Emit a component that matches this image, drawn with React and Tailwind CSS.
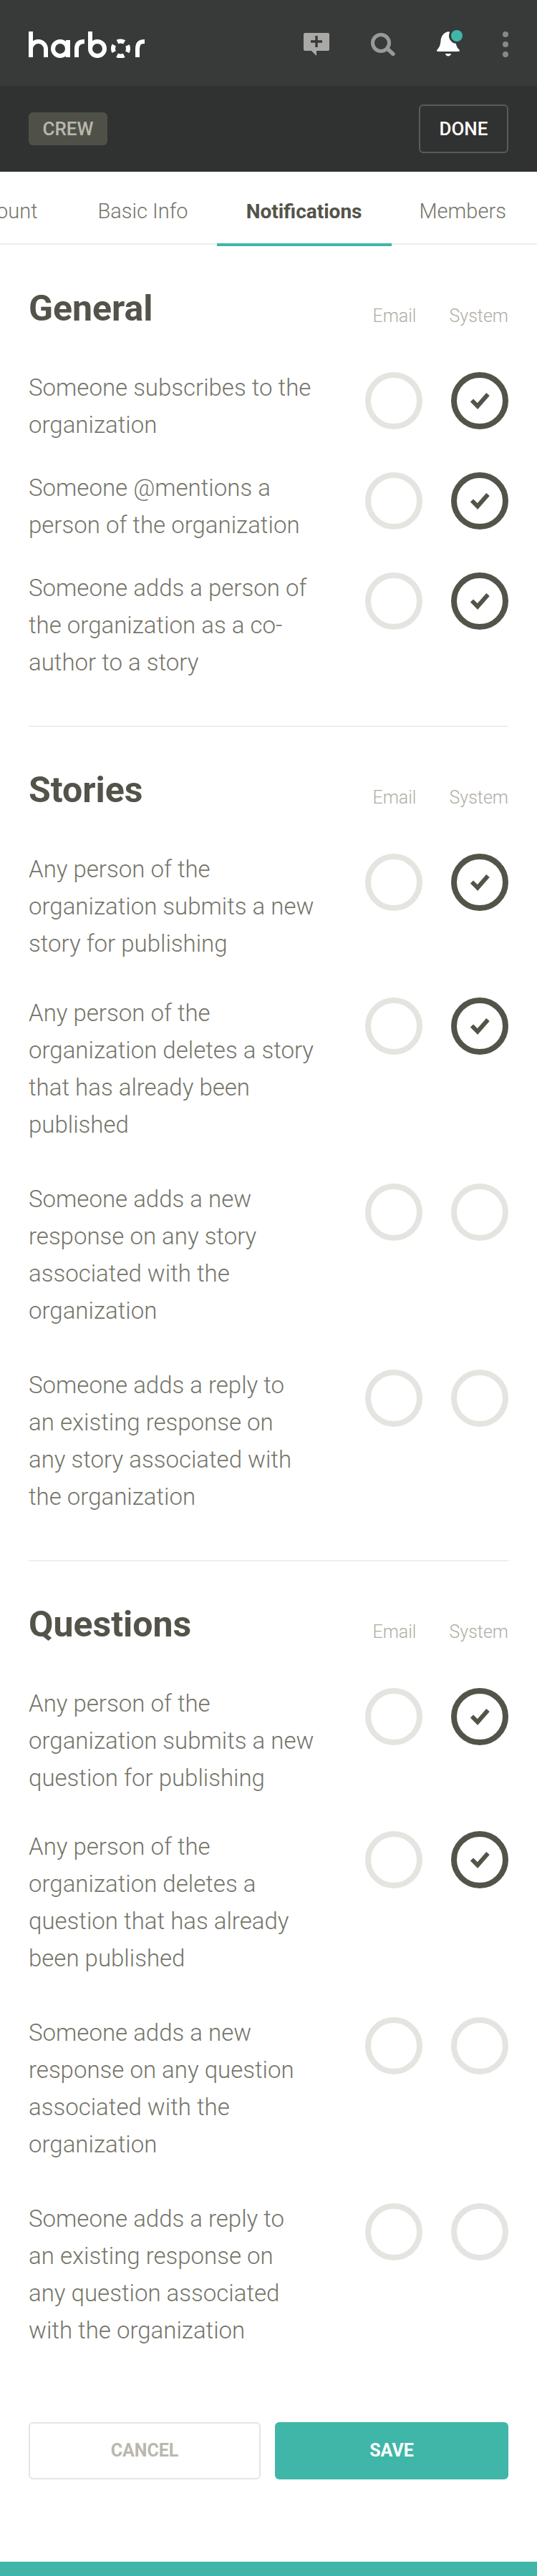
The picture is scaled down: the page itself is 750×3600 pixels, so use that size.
function Circle({ on }) {
  return (
    <div className={`flex h-[80px] w-[80px] items-center justify-center rounded-full border-[8px] ${on ? "border-[#53534a]" : "border-[#e4e4e0]"}`}>
      {on && (
        <svg width="28" height="24" viewBox="0 0 28 24" fill="none">
          <path d="M3 11.5 L11 19.5 L25.5 3" stroke="#53534a" strokeWidth="6" />
        </svg>
      )}
    </div>
  );
}

function Row({ text, system, pb }) {
  return (
    <div className={`flex items-start justify-between ${pb}`}>
      <p className="mb-[-2px] w-[402px] pt-[2px] text-[33px] leading-[52px] font-light text-[#74756a]">{text}</p>
      <div className="flex gap-[40px] pt-[6px]">
        <Circle />
        <Circle on={system} />
      </div>
    </div>
  );
}

function Head({ title }) {
  return (
    <div className="flex items-end justify-between">
      <h2 className="text-[50px] leading-[56px] font-bold text-[#53534a]">{title}</h2>
      <div className="flex gap-[46px] pb-[1px] text-[25px] leading-[32px] font-light text-[#aeada3]">
        <span>Email</span>
        <span>System</span>
      </div>
    </div>
  );
}

const sections = [
  {
    title: "General",
    rows: [
      ["Someone subscribes to the organization", true, "pb-[36px]"],
      ["Someone @mentions a person of the organization", true, "pb-[36px]"],
      ["Someone adds a person of the organization as a co-author to a story", true, "pb-[64px]"],
    ],
  },
  {
    title: "Stories",
    rows: [
      ["Any person of the organization submits a new story for publishing", true, "pb-[45px]"],
      ["Any person of the organization deletes a story that has already been published", true, "pb-[52px]"],
      ["Someone adds a new response on any story associated with the organization", false, "pb-[52px]"],
      ["Someone adds a reply to an\u00a0existing response on any\u00a0story associated with the organization", false, "pb-[64px]"],
    ],
  },
  {
    title: "Questions",
    rows: [
      ["Any person of the organization submits a new question for publishing", true, "pb-[44px]"],
      ["Any person of the organization deletes a question that has already been published", true, "pb-[52px]"],
      ["Someone adds a new response on any question associated with the organization", false, "pb-[52px]"],
      ["Someone adds a reply to an\u00a0existing response on any\u00a0question associated with the organization", false, "pb-[64px]"],
    ],
  },
];

export default function App() {
  return (
    <div className="flex h-[3600px] w-[750px] flex-col overflow-hidden bg-white font-['Roboto',sans-serif]">
      <header className="flex h-[120px] shrink-0 items-center justify-between bg-[#383a39] px-[40px] pt-[4px]">
        <svg width="162" height="37" viewBox="0 0 162 37" fill="none" stroke="#fff" strokeWidth="6">
          <path d="M3 0 V36 M24 36 V24.5 A10.5 10.5 0 0 0 3 24.5" />
          <circle cx="44" cy="24" r="10" />
          <path d="M55 12 V36" />
          <path d="M67 36 V24 C67 16 72 14 78 14" />
          <path d="M86 0 V24" />
          <circle cx="96" cy="24" r="10" />
          <circle cx="128.5" cy="24" r="10.5" strokeDasharray="10 6.5" strokeDashoffset="5" />
          <path d="M152 36 V24 C152 16 156 14 162 14" />
        </svg>
        <div className="flex items-center">
          <svg className="mr-[58px]" width="36" height="32" viewBox="0 0 36 32">
            <path d="M2 0 H34 a2 2 0 0 1 2 2 V23 a2 2 0 0 1 -2 2 H18 V32 L11 25 H2 a2 2 0 0 1 -2 -2 V2 a2 2 0 0 1 2 -2 Z" fill="#a9a9a7" />
            <path d="M18 4 V20 M10 12 H26" stroke="#383a39" strokeWidth="3.4" />
          </svg>
          <svg className="mr-[58px]" width="34" height="32" viewBox="0 0 34 32" fill="none">
            <circle cx="14" cy="14" r="11.5" stroke="#999" strokeWidth="5" />
            <path d="M23.5 22.5 L31 29.5" stroke="#999" strokeWidth="5.4" strokeLinecap="round" />
          </svg>
          <div className="relative mr-[60px] h-[36px] w-[32px]">
            <svg width="32" height="36" viewBox="0 0 32 36">
              <path d="M16 0 C8 2 6 8 5.5 13 C5 20 3 23 0.5 25.5 C-0.5 27.5 0.5 28 2 28 H30 C31.5 28 32.5 26.5 31.5 25.5 C28.5 23 27 20 26.5 14 C26 7 23 2 16 0 Z" fill="#fff" />
              <path d="M12 31 H20 C19.5 35.5 12.5 35.5 12 31 Z" fill="#fff" />
            </svg>
            <span className="absolute left-[20px] top-[-2px] h-[16px] w-[16px] rounded-full bg-[#40b6a8] ring-[3px] ring-[#383a39]" />
          </div>
          <div className="flex flex-col gap-[6px]">
            <span className="h-[8px] w-[8px] rounded-full bg-[#888]" />
            <span className="h-[8px] w-[8px] rounded-full bg-[#888]" />
            <span className="h-[8px] w-[8px] rounded-full bg-[#888]" />
          </div>
        </div>
      </header>
      <div className="flex h-[120px] shrink-0 items-center justify-between bg-[#303231] px-[40px]">
        <span className="flex h-[46px] w-[110px] items-center justify-center rounded-[6px] bg-[#4f5149] text-[26px] font-medium text-[#b9b8ae]">CREW</span>
        <span className="flex h-[68px] w-[125px] items-center justify-center rounded-[6px] border-2 border-[#5a5b54] text-[26px] font-medium text-white">DONE</span>
      </div>
      <nav className="flex h-[102px] shrink-0 items-start border-b-2 border-[#eeeeee] text-[29px] font-light whitespace-nowrap text-[#74756a]">
        <span className="ml-[-97px] flex h-[100px] items-center px-[44px] pt-[12px]">Account</span>
        <span className="flex h-[100px] items-center px-[40px] pt-[12px]">Basic Info</span>
        <span className="flex h-[104px] items-center border-b-[4px] border-[#40b6a8] px-[41px] pt-[12px] text-[28px] font-bold text-[#53534a]">Notifications</span>
        <span className="flex h-[100px] items-center px-[39px] pt-[12px]">Members</span>
      </nav>
      <main className="flex flex-col px-[40px] pt-[61px]">
        {sections.map((s, i) => (
          <section key={s.title} className={i < 2 ? "mb-[60px] border-b-2 border-[#eeeeee]" : ""}>
            <Head title={s.title} />
            <div className="mt-[55px]">
              {s.rows.map((r) => (
                <Row key={r[0]} text={r[0]} system={r[1]} pb={r[2]} />
              ))}
            </div>
          </section>
        ))}
        <div className="mt-[40px] flex gap-[20px]">
          <button className="flex h-[80px] w-[324px] items-center justify-center rounded-[6px] border-2 border-[#e4e4e0] text-[25px] font-bold text-[#b9b8ae]">CANCEL</button>
          <button className="flex h-[80px] flex-1 items-center justify-center rounded-[6px] bg-[#40b6a8] text-[25px] font-bold text-white">SAVE</button>
        </div>
      </main>
      <div className="mt-auto h-[20px] shrink-0 bg-[#40b6a8]" />
    </div>
  );
}
